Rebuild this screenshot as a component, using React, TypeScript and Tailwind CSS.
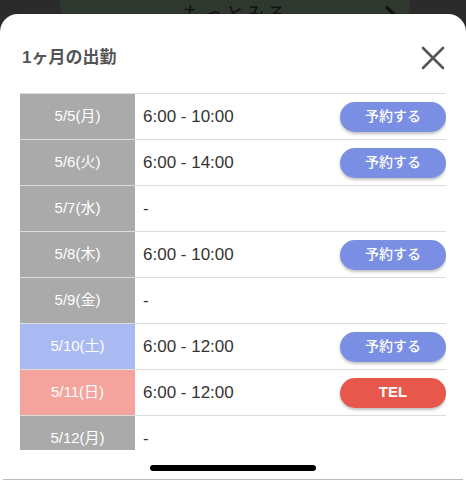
import React from 'react';

type Row = { date: string; time: string; kind?: 'sat' | 'sun'; action?: 'book' | 'tel' };

const rows: Row[] = [
  { date: '5/5(月)', time: '6:00 - 10:00', action: 'book' },
  { date: '5/6(火)', time: '6:00 - 14:00', action: 'book' },
  { date: '5/7(水)', time: '-' },
  { date: '5/8(木)', time: '6:00 - 10:00', action: 'book' },
  { date: '5/9(金)', time: '-' },
  { date: '5/10(土)', time: '6:00 - 12:00', kind: 'sat', action: 'book' },
  { date: '5/11(日)', time: '6:00 - 12:00', kind: 'sun', action: 'tel' },
  { date: '5/12(月)', time: '-' },
];

const font = { fontFamily: '"Liberation Sans", "Noto Sans CJK JP", sans-serif' };

const App: React.FC = () => {
  return (
    <div className="relative w-[466px] h-[480px] overflow-hidden bg-[#2b2b2b]" style={font}>
      {/* card behind the sheet */}
      <div className="absolute left-[60px] right-[56px] top-[-30px] h-[60px] rounded-[24px] bg-[#2f382e] flex justify-center">
        <span className="mt-[30px] text-[20px] text-[#111] tracking-wider">もっとみる</span>
        <div className="absolute right-[16px] top-[34px] w-[3px] h-[18px] bg-[#111] rotate-[-45deg]" />
      </div>

      <div className="absolute left-0 right-0 top-[14px] bottom-0 bg-white rounded-t-[18px] flex flex-col">
        <div className="flex items-center justify-between pl-[22px] pr-[22px] h-[79px] pt-[9px]">
          <h2 className="text-[17px] font-bold text-[#555]">1ヶ月の出勤</h2>
          <svg width="26" height="26" viewBox="0 0 26 26" className="mr-[-2px]">
            <path d="M3 3 L23 23 M23 3 L3 23" stroke="#555" strokeWidth="2.6" strokeLinecap="round" />
          </svg>
        </div>

        <div className="mx-[20px] h-[357px] overflow-hidden border-t border-[#dcdcdc]">
          {rows.map((r) => (
            <div key={r.date} className="flex h-[46px] border-b border-[#dcdcdc]">
              <div
                className={`w-[115px] flex items-center justify-center text-[15px] text-white ${
                  r.kind === 'sat' ? 'bg-[#a9b9f2]' : r.kind === 'sun' ? 'bg-[#f4a49d]' : 'bg-[#aaaaaa]'
                }`}
              >
                {r.date}
              </div>
              <div className="flex-1 flex items-center justify-between pl-[8px]">
                <span className="text-[17px] text-[#333] leading-none">{r.time}</span>
                {r.action === 'book' && (
                  <button className="w-[106px] h-[30px] rounded-full bg-[#7a8fe3] text-white text-[14px] font-medium shadow-[0_2px_3px_rgba(0,0,0,0.25)]">
                    予約する
                  </button>
                )}
                {r.action === 'tel' && (
                  <button className="w-[106px] h-[30px] rounded-full bg-[#e8574b] text-white text-[15px] font-bold shadow-[0_2px_3px_rgba(0,0,0,0.25)]">
                    TEL
                  </button>
                )}
              </div>
            </div>
          ))}
        </div>

        <div className="flex-1 flex flex-col items-center justify-end">
          <div className="w-[166px] h-[6px] rounded-full bg-black mb-[8px]" />
          <div className="w-[460px] h-px bg-[#bbbbbb]" />
        </div>
      </div>
    </div>
  );
};

export default App;
